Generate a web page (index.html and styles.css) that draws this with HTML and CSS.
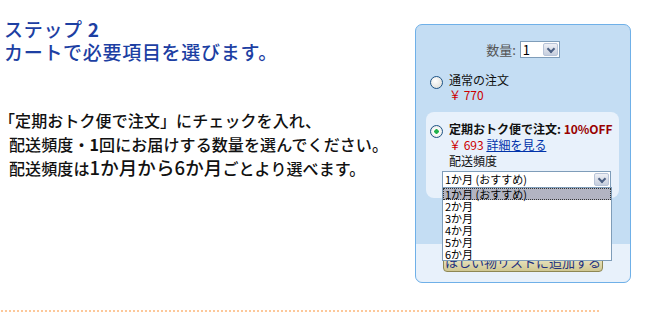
FILE: index.html
```html
<!DOCTYPE html>
<html lang="ja">
<head>
  <meta charset="UTF-8" />
  <title>ステップ 2</title>
  <link rel="stylesheet" href="styles.css">
</head>
<body>
  <div class="page">
    <div class="intro">
      <h2 class="step">ステップ <b>2</b><br>カートで必要項目を選びます。</h2>
      <p class="desc">
        <span class="hang">「</span>定期おトク便で注文」にチェックを入れ、<br>
        配送頻度・<b>1</b>回にお届けする数量を選んでください。<br>
        配送頻度は<span class="big">1か月から6か月</span>ごとより選べます。
      </p>
    </div>

    <div class="panel">
      <div class="qty">
        <span class="qty-label">数量:</span>
        <div class="select small"><span>1</span><i class="arrow"></i></div>
      </div>

      <div class="option">
        <span class="radio"></span>
        <div>
          <div>通常の注文</div>
          <div class="price">￥ 770</div>
        </div>
      </div>

      <div class="sub-box">
        <div class="option">
          <span class="radio on"></span>
          <div>
            <div class="sub-title">定期おトク便で注文: <span class="off">10%OFF</span></div>
            <div><span class="price">￥ 693</span> <a href="#">詳細を見る</a></div>
            <div>配送頻度</div>
            <div class="freq">
              <div class="select wide"><span>1か月 (おすすめ)</span><i class="arrow"></i></div>
              <ul class="dropdown">
                <li class="sel">1か月 (おすすめ)</li>
                <li>2か月</li>
                <li>3か月</li>
                <li>4か月</li>
                <li>5か月</li>
                <li>6か月</li>
              </ul>
            </div>
          </div>
        </div>
      </div>

      <div class="panel-foot">
        <button class="wish">ほしい物リストに追加する</button>
      </div>
    </div>
  </div>
  <div class="rule"></div>
</body>
</html>
```

FILE: styles.css
```css
body {
  margin: 0;
  font-family: "Noto Sans CJK JP", "Noto Sans", sans-serif;
  color: #111;
  background: #fff;
}
.page {
  display: flex;
  height: 310px;
}
.intro {
  width: 415px;
}
.step {
  margin: 0;
  padding: 17px 0 0 4px;
  font-size: 19px;
  line-height: 23px;
  font-weight: 500;
  letter-spacing: 0.7px;
  color: #1d3fa3;
}
.step b {
  font-weight: 700;
}
.desc {
  margin: 0;
  padding: 46px 0 0 9px;
  font-size: 16px;
  line-height: 23.5px;
  font-weight: 500;
  letter-spacing: 0.1px;
}
.desc b {
  font-weight: 700;
}
.hang {
  margin-left: -10px;
}
.big {
  font-size: 18.5px;
}
.panel {
  position: relative;
  box-sizing: border-box;
  width: 216px;
  height: 259px;
  margin-top: 24px;
  border: 1px solid #6fb0e8;
  border-radius: 7px;
  background: #c4ddf3;
  font-size: 12px;
  line-height: 15px;
}
.qty {
  display: flex;
  justify-content: center;
  align-items: center;
  gap: 4px;
  padding-top: 16px;
}
.qty-label {
  color: #555;
  font-size: 13px;
}
.select {
  box-sizing: border-box;
  display: flex;
  align-items: center;
  justify-content: space-between;
  height: 17px;
  border: 1px solid #7f9db9;
  background: #fff;
  font-size: 13px;
  line-height: 15px;
  color: #000;
}
.select span {
  padding-left: 2px;
}
.select.small {
  width: 40px;
}
.select.wide {
  width: 169px;
  margin-left: -7px;
  font-size: 11px;
}
.arrow {
  position: relative;
  width: 15px;
  height: 13px;
  margin-right: 1px;
  border: 1px solid #b8c4d8;
  border-radius: 2px;
  background: linear-gradient(#eef0f6, #c6cedd);
  box-sizing: border-box;
}
.arrow::after {
  content: "";
  position: absolute;
  left: 4px;
  top: 2px;
  width: 4px;
  height: 4px;
  border-right: 2px solid #4d6185;
  border-bottom: 2px solid #4d6185;
  transform: rotate(45deg);
}
.option {
  display: flex;
  align-items: flex-start;
  gap: 6px;
  padding-left: 14px;
  margin-top: 14px;
}
.radio {
  flex: none;
  box-sizing: border-box;
  width: 13px;
  height: 13px;
  margin-top: 4px;
  border: 1px solid #1d5385;
  border-radius: 50%;
  background: radial-gradient(circle at 40% 35%, #fff, #d8d8d2);
}
.radio.on {
  background: radial-gradient(circle, #22b14c 0 2px, #fff 2.5px, #dcdcd6);
}
.price {
  color: #c00;
}
.sub-box {
  margin: 10px 11px 0 10px;
  padding: 9px 0 10px;
  border-radius: 8px;
  background: #e8f1fb;
}
.sub-box .option {
  margin-top: 0;
  padding-left: 4px;
  line-height: 16px;
}
.sub-title {
  font-weight: 700;
  font-size: 12px;
  white-space: nowrap;
}
.off {
  color: #990000;
}
a {
  color: #0033aa;
  text-decoration: underline;
}
.freq {
  position: relative;
  margin-top: 2px;
}
.dropdown {
  position: absolute;
  top: 16px;
  left: -7px;
  z-index: 2;
  box-sizing: border-box;
  width: 170px;
  margin: 0;
  padding: 0;
  list-style: none;
  border: 1px solid #7f9db9;
  background: #fff;
  font-size: 11px;
  line-height: 12px;
  color: #000;
}
.dropdown li {
  height: 12px;
  padding-left: 2px;
}
.dropdown li.sel {
  background: #b2b4c2;
  outline: 1px dotted #333;
  outline-offset: -1px;
}
.panel-foot {
  position: absolute;
  left: 0;
  right: 0;
  bottom: 0;
  height: 38px;
  border-radius: 0 0 7px 7px;
  background: #e8f1fb;
  display: flex;
  justify-content: center;
  padding-top: 8px;
  box-sizing: border-box;
}
.wish {
  width: 160px;
  height: 20px;
  padding: 0;
  border: 1px solid #8e8754;
  border-radius: 4px;
  background: linear-gradient(#f6f3d6, #cfc792);
  color: #23307e;
  font-family: inherit;
  font-size: 13px;
  line-height: 18px;
}
.rule {
  width: 600px;
  height: 2px;
  margin-left: 1px;
  background: repeating-linear-gradient(90deg, #fdc89a 0 2px, transparent 2px 4px);
}
```
